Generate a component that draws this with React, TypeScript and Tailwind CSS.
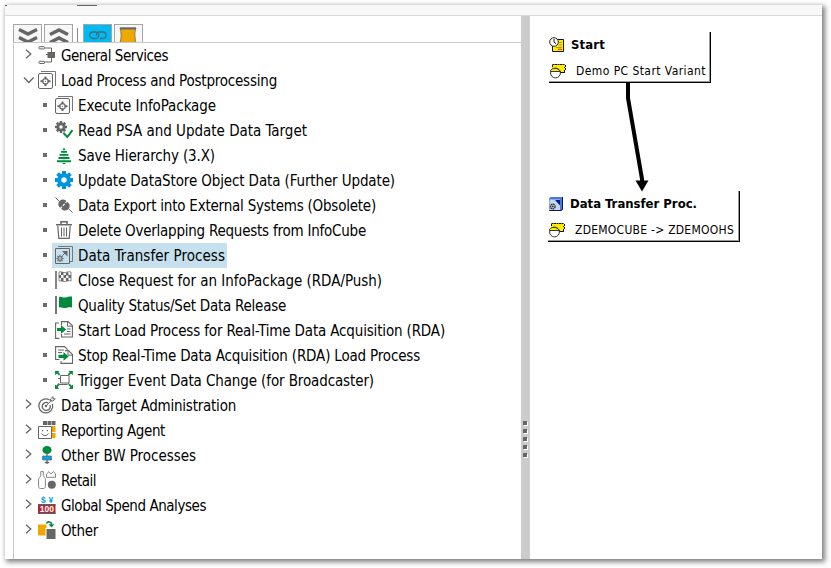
import { useLayoutEffect, useRef, type ReactNode } from 'react';

const G = '#666666';
const GREEN = '#008a3b';

/** Text label whose letter spacing is adjusted so that it fills a given width. */
function Label({ text, width, className = '' }: { text: string; width: number; className?: string }) {
  const ref = useRef<HTMLSpanElement>(null);
  useLayoutEffect(() => {
    const el = ref.current;
    if (!el) return;
    el.style.letterSpacing = '0px';
    const natural = el.getBoundingClientRect().width;
    el.style.letterSpacing = `${(width - natural) / text.length}px`;
  }, [text, width]);
  return (
    <span ref={ref} className={`inline-block whitespace-nowrap ${className}`}>
      {text}
    </span>
  );
}

function Icon({ children }: { children: ReactNode }) {
  return (
    <svg width="18" height="18" viewBox="0 0 18 18" fill="none" className="mt-[3px] shrink-0 overflow-visible">
      {children}
    </svg>
  );
}

const gearTeeth = (cx: number, cy: number, r: number, w: number) =>
  [0, 45, 90, 135].map((a) => (
    <rect key={a} x={cx - w / 2} y={cy - r} width={w} height={r * 2} transform={`rotate(${a} ${cx} ${cy})`} />
  ));

const icons: Record<string, ReactNode> = {
  services: (
    <Icon>
      <path d="M7 2h6.500v4M13.500 12v4H7" stroke={G} />
      <rect x="1" y=".7" width="5.500" height="2.200" rx=".6" stroke={G} />
      <rect x="1" y="15.300" width="5.500" height="2.200" rx=".6" stroke={G} />
      <path d="M8 8.500h2" stroke={G} />
      <rect x="9.500" y="6" width="7.500" height="6" fill={G} />
    </Icon>
  ),
  pack: (
    <Icon>
      <path d="M3 .5H17.500V15" stroke="#777" />
      <rect x=".5" y="2.500" width="14" height="15" rx="1.500" stroke={G} />
      <path d="M6.500 5.500h2v2.500h-2zM6.500 12.500h2V15h-2zM2.500 9.300H5v2H2.500zM10 9.300h2.500v2H10z" fill={G} />
      <rect x="5" y="7.800" width="5" height="5" rx="1.500" stroke={G} strokeWidth="1.300" />
      <rect x="7" y="9.800" width="1" height="1" fill={G} />
    </Icon>
  ),
  gearCheck: (
    <Icon>
      <g fill={G}>{gearTeeth(6, 6, 6, 2.5)}</g>
      <circle cx="6" cy="6" r="3.200" stroke={G} strokeWidth="2.600" />
      <circle cx="6" cy="6" r="1.700" fill="#fff" />
      <path d="M8.300 11.800l4 4.200 5.200-6.800" stroke="#fff" strokeWidth="4" />
      <path d="M8.300 11.800l4 4.200 5.200-6.800" stroke={GREEN} strokeWidth="2" />
    </Icon>
  ),
  hierarchy: (
    <Icon>
      <path
        d="M9 1.800l1.800 2H7.200zM6 5h6v1.700H6zM4.500 8h9v1.700h-9zM3.500 11h11v2h-11zM2 14.200h14v2H2z"
        fill={GREEN}
      />
      <path d="M8.500 3.500h1V15h-1z" fill={GREEN} opacity=".5" />
      <path d="M7.500 17h3v1h-3z" fill={GREEN} />
    </Icon>
  ),
  gear: (
    <Icon>
      <g fill="#0094df">{gearTeeth(9, 9, 9, 4)}</g>
      <circle cx="9" cy="9" r="4.800" stroke="#0094df" strokeWidth="4" />
      <circle cx="9" cy="9" r="2.700" fill="#fff" />
    </Icon>
  ),
  plug: (
    <Icon>
      <path d="M.5 1.500l4 4M13.500 12.500l4 4" stroke={G} />
      <g transform="rotate(42 9 9)">
        <path d="M8.200 4.500H7a4 4.500 0 000 9h1.200zM9.300 4.500H11a4 4.500 0 010 9H9.300z" fill={G} />
        <path d="M7.500 7h2.500M7.500 11h2.500" stroke={G} strokeWidth="1.200" />
      </g>
    </Icon>
  ),
  trash: (
    <Icon>
      <path d="M1 3.700h16M6 3V.8h6V3" stroke={G} strokeWidth="1.500" />
      <path d="M2.800 5l1 12.300h10.400L15.200 5" stroke={G} strokeWidth="1.200" />
      <path d="M6.500 6.500v9M9 6.500v9M11.500 6.500v9" stroke={G} />
    </Icon>
  ),
  transfer: (
    <Icon>
      <path d="M3 .5h14.500V15.500H15" stroke="#777" />
      <path d="M.5 2.500h14v15H.5z" stroke={G} />
      <path d="M7 5h5.500v5.500z" fill={G} />
      <path d="M12 5l-4.500 4.500" stroke={G} />
      <g fill={G}>{gearTeeth(5, 12.5, 3.6, 1.2)}</g>
      <circle cx="5" cy="12.500" r="1.900" fill="#c7e0ee" stroke={G} />
      <rect x="4.500" y="12" width="1" height="1" fill={G} />
    </Icon>
  ),
  checkered: (
    <Icon>
      <path d="M1 0v18" stroke={G} strokeWidth="1.600" />
      <path d="M4 1c2-1 4 1 6.300.5C12.500 1 14 .3 16 1v9c-2-.7-3.500 0-5.500.5S6 9.300 4 10z" stroke={G} strokeWidth=".8" />
      <path d="M6 1h2.500v3H6zM11 1.500h2.500v3H11zM4 4h2v3H4zM8.500 4H11v3H8.500zM13.500 4H16v3h-2.500zM6 7h2.500v3H6zM11 7h2.500v3H11z" fill={G} />
    </Icon>
  ),
  flag: (
    <Icon>
      <path d="M1 0v18" stroke={G} strokeWidth="1.800" />
      <path d="M4 1c2-1.200 4 .9 6.300.5C13 1 14.500.2 17 .5v11c-2.500-.8-4 0-6.300.5S6 10.300 4 11.500z" fill={GREEN} />
    </Icon>
  ),
  start: (
    <Icon>
      <path d="M4.500 17.400H.6V2H4M6.500 4.500V.6H13l4.400 4v11.400H6.500V13" stroke={G} strokeWidth="1.100" />
      <path d="M12.500 1v4.200H17M12 8h3.500M12 10.500h3.500M9 13h6.500" stroke={G} />
      <path d="M2 7h4V4.200L11.300 8.500 6 12.800V10H2z" fill={GREEN} />
    </Icon>
  ),
  stop: (
    <Icon>
      <path d="M4.500 13.500H.6V.6h9l3 3M10 4.600h3.500l4 4v8.800H6V15" stroke={G} strokeWidth="1.100" />
      <path d="M3 4h6M3 6.500h4M13 5v4.200h4" stroke={G} />
      <path d="M3.500 8.800h5V6.100l5.200 4.400-5.200 4.300v-2.700h-5z" fill={GREEN} />
    </Icon>
  ),
  trigger: (
    <Icon>
      <path
        d="M0 0h4.500L3.300 1.300l2 2-1.300 1.300-2-2L.3 4.300zM18 0h-4.500l1.200 1.300-2 2L14 4.600l2-2 1.700 1.700zM0 18v-4.500l1.300 1.200 2-2L4.600 14l-2 2 1.700 1.700zM18 18v-4.500l-1.300 1.200-2-2L13.400 14l2 2-1.700 1.700z"
        fill={GREEN}
      />
      <path d="M5.500 4.500h8.500v7.500H5.500z" stroke={G} />
      <path d="M3 7.500h2M3 13.500h9M4 12l-1.500 2.500M14 12l-1.500 2" stroke={G} />
    </Icon>
  ),
  target: (
    <Icon>
      <path d="M11.500 4A7 7 0 1014.500 8" stroke={G} strokeWidth="1.300" />
      <path d="M10 6.800a4 4 0 102 2.200" stroke={G} strokeWidth="1.300" />
      <circle cx="8" cy="10" r="1.200" fill={G} />
      <path d="M8 10l6-6.300M12.500 5V3L15 .6v2.200h2.300L15 5z" stroke={G} />
    </Icon>
  ),
  agent: (
    <Icon>
      <path d="M5 0h4v4H5zM9.500 0h4v4h-4zM14 0h3.500v4H14z" fill={G} />
      <path d="M14 5h3.500v6H14zM14 12h3.500v5H14z" fill="#f0a800" />
      <path d="M.5 5.500h13v12H.5z" fill="#fff" stroke={G} />
      <path d="M4 9h1.200v1.300H4zM8.800 9H10v1.300H8.800z" fill={G} />
      <path d="M3.500 12.500c1.500 2.700 5.500 2.700 7 0" stroke={G} />
    </Icon>
  ),
  other: (
    <Icon>
      <ellipse cx="9" cy="4" rx="4.600" ry="4" fill={GREEN} />
      <path d="M9 7v11" stroke={G} strokeWidth="1.300" />
      <path d="M4.500 10h9v4h-9z" fill="#00a5e5" stroke={G} strokeWidth=".7" />
      <path d="M6.800 15.800h4.400v1.400H6.800z" fill={G} />
    </Icon>
  ),
  retail: (
    <Icon>
      <path d="M2.800.6h2.500v4.200C6.200 6 7.400 7 7.400 8.500v7c0 1.400-.8 2-2 2H2.600c-1.200 0-2-.6-2-2v-7C.6 7 2.800 6 2.800 4z" stroke="#777" strokeWidth=".9" />
      <path d="M8.500 6.300V3L11 .6l2 2.400L15.500.6l2 2.400v3.300z" stroke="#777" strokeWidth=".9" />
      <circle cx="13.800" cy="13.800" r="4" fill={G} />
    </Icon>
  ),
  spend: (
    <Icon>
      <text x="3" y="6.600" fontSize="8.500" fontWeight="bold" fontFamily="Liberation Sans" fill="#009de0">$</text>
      <text x="10.500" y="6.600" fontSize="8.500" fontWeight="bold" fontFamily="Liberation Sans" fill="#009de0">¥</text>
      <path d="M0 8h17.500v10H0z" fill="#bb1f26" />
      <path d="M0 8h17.500v1.500H0zM0 16.500h17.500V18H0z" fill="#62595a" />
      <text x="1.700" y="16" fontSize="8.500" fontWeight="bold" fontFamily="Liberation Sans" fill="#fff">100</text>
    </Icon>
  ),
  misc: (
    <Icon>
      <path d="M0 3.500h8.500v11H0z" fill="#f0a800" />
      <path d="M7.500 7h10.500V18H7.500z" fill="#fff" />
      <path d="M8.500 8h9v10h-9z" fill={G} />
      <path d="M8.500 2.500c1-2.500 5-2 5 1" stroke={GREEN} strokeWidth="1.600" />
      <path d="M10.500 3.300h6l-3 3.200z" fill={GREEN} />
    </Icon>
  ),
};

type Row = { icon: string; text: string; w: number; child?: boolean; open?: boolean; selected?: boolean };

const rows: Row[] = [
  { icon: 'services', text: 'General Services', w: 107 },
  { icon: 'pack', text: 'Load Process and Postprocessing', w: 216, open: true },
  { icon: 'pack', text: 'Execute InfoPackage', w: 138, child: true },
  { icon: 'gearCheck', text: 'Read PSA and Update Data Target', w: 229, child: true },
  { icon: 'hierarchy', text: 'Save Hierarchy (3.X)', w: 137, child: true },
  { icon: 'gear', text: 'Update DataStore Object Data (Further Update)', w: 317, child: true },
  { icon: 'plug', text: 'Data Export into External Systems (Obsolete)', w: 298, child: true },
  { icon: 'trash', text: 'Delete Overlapping Requests from InfoCube', w: 288, child: true },
  { icon: 'transfer', text: 'Data Transfer Process', w: 147, child: true, selected: true },
  { icon: 'checkered', text: 'Close Request for an InfoPackage (RDA/Push)', w: 304, child: true },
  { icon: 'flag', text: 'Quality Status/Set Data Release', w: 208, child: true },
  { icon: 'start', text: 'Start Load Process for Real-Time Data Acquisition (RDA)', w: 367, child: true },
  { icon: 'stop', text: 'Stop Real-Time Data Acquisition (RDA) Load Process', w: 342, child: true },
  { icon: 'trigger', text: 'Trigger Event Data Change (for Broadcaster)', w: 296, child: true },
  { icon: 'target', text: 'Data Target Administration', w: 175 },
  { icon: 'agent', text: 'Reporting Agent', w: 104 },
  { icon: 'other', text: 'Other BW Processes', w: 135 },
  { icon: 'retail', text: 'Retail', w: 35 },
  { icon: 'spend', text: 'Global Spend Analyses', w: 145 },
  { icon: 'misc', text: 'Other', w: 37 },
];

function TreeRow({ row }: { row: Row }) {
  return (
    <div className={`flex h-[25px] items-start ${row.child ? 'pl-[29px]' : 'pl-[9px]'}`}>
      {row.child ? (
        <span className="mt-2.5 mr-[5px] size-1 shrink-0 bg-[#6c6c6c]" />
      ) : (
        <svg width="12" height="14" viewBox="0 0 12 14" fill="none" stroke="#666" strokeWidth="1.300" className="mt-1 mr-[3px] shrink-0">
          {row.open ? <path d="M1 5.500l4.800 5 4.800-5" /> : <path d="M3 2.800l4.800 4.200L3 11.200" />}
        </svg>
      )}
      <div className={`flex h-[25px] items-start gap-[5px] pr-0.5 ${row.child ? 'pl-[3px]' : ''} ${row.selected ? 'bg-[#c7e0ee]' : ''}`}>
        {icons[row.icon]}
        <Label text={row.text} width={row.w} className="pt-px text-[15px] leading-[25px]" />
      </div>
    </div>
  );
}

function ToolButton({ active, children }: { active?: boolean; children: ReactNode }) {
  return (
    <div className={`flex h-[18px] w-[29px] justify-center overflow-hidden border border-b-0 border-[#a5a5a5] ${active ? 'bg-[#00bbf2]' : 'bg-[#f7f7f7]'}`}>
      {children}
    </div>
  );
}

function VariantIcon() {
  return (
    <svg width="17" height="16" viewBox="0 0 17 16" fill="none" className="shrink-0">
      <path d="M3 1h13v8H3z" fill="#ffec00" />
      <path d="M3.500 4V1.500H16" stroke="#111" strokeDasharray="2 .5" />
      <path d="M16.500 2v2M15.500 4v1M16.500 5v2M15.500 7v2M11 9.500h5" stroke="#111" />
      <circle cx="6.500" cy="10" r="4.900" stroke="#333" />
      <path d="M1.500 7.500C3 4.500 9 4.500 11.500 8.500H1.500z" fill="#ffec00" stroke="#222" strokeWidth=".9" />
    </svg>
  );
}

function StartIcon() {
  return (
    <svg width="17" height="16" viewBox="0 0 17 16" fill="none" className="shrink-0">
      <path d="M3.500 2.500h11v11.500h-11z" fill="#ffec00" />
      <path d="M8 2.500h6.500v12H3.500V9" stroke="#111" />
      <path d="M10 5.500h3M9.500 8h3.500M7 10.500h6" stroke="#b29a00" />
      <path d="M9 12.300h4" stroke="#e02020" />
      <circle cx="5" cy="5" r="4.300" fill="#fff" stroke="#222" />
      <path d="M5 2v3.200l2 1.500" stroke="#111" />
    </svg>
  );
}

function TransferNodeIcon() {
  return (
    <svg width="17" height="16" viewBox="0 0 17 16" fill="none" className="shrink-0">
      <path d="M1 2.500L2.500 1h12v12.500L13 15H1z" fill="#4d79d9" />
      <path d="M14.500 1v12.500L13 14.500H1.500" stroke="#10193f" />
      <path d="M1.500 3.500H12V14H1.500z" fill="#c4d8fb" />
      <path d="M7 4h5v5.500z" fill="#0b1597" />
      <circle cx="4.700" cy="10.500" r="2.400" fill="#bbb" stroke="#222" strokeWidth="1.200" strokeDasharray="1.500 .6" />
      <circle cx="4.700" cy="10.500" r=".7" fill="#111" />
    </svg>
  );
}

const nodeEdge = 'shadow-[inset_-1px_-1px_0_#999] border-r border-b border-black';

export default function App() {
  return (
    <div className="h-[568px] w-[831px] overflow-hidden bg-white pt-[5px] pl-[5px] font-['DejaVu_Sans_Condensed','DejaVu_Sans',sans-serif] text-black">
      <div className="relative flex h-[554px] w-[817px] flex-col bg-white shadow-[2px_2px_5px_1px_rgba(0,0,0,0.5)]">
        <div className="h-[11px] shrink-0 border-b border-[#dadada] bg-[#f8f8f8]" />
        <span className="absolute top-0 left-0 h-px w-0.5 bg-[#555]" />
        <span className="absolute top-0 left-[72px] h-px w-5 bg-[#666]" />
        <div className="flex grow">
          <section className="flex w-[516px] flex-col pl-2">
            <div className="flex h-[26px] shrink-0 items-end gap-0.5">
              <ToolButton>
                <svg width="20" height="19" viewBox="0 0 20 19" fill="none" stroke="#666" strokeWidth="3.400">
                  <path d="M1 4.500l9 4.500 9-4.500M1 12.500l9 4.500 9-4.500" />
                </svg>
              </ToolButton>
              <ToolButton>
                <svg width="20" height="19" viewBox="0 0 20 19" fill="none" stroke="#666" strokeWidth="3.400">
                  <path d="M1 9.500L10 5l9 4.500M1 17.500l9-4.500 9 4.500" />
                </svg>
              </ToolButton>
              <span className="mr-[3px] ml-0.5 h-[14px] w-px bg-[#888]" />
              <ToolButton active>
                <svg width="20" height="18" viewBox="0 0 20 18" fill="none" stroke="#426f80" strokeWidth="1.300">
                  <rect x="1.700" y="7" width="9" height="6.500" rx="3.200" />
                  <path d="M8.500 10.500C8.500 8.200 9.500 7 11.500 7h3.300a3.200 3.200 0 010 6.500H12" />
                </svg>
              </ToolButton>
              <ToolButton>
                <svg width="20" height="18" viewBox="0 0 20 18" className="-ml-0.5">
                  <path d="M2 3h16c-1.500 4-1.500 8 0 15H2c1.500-6 1.500-10 0-15z" fill="#eea800" stroke="#666" strokeWidth=".8" />
                  <path d="M2 2.500h16v2H2z" fill="#666" />
                </svg>
              </ToolButton>
            </div>
            <div className="grow border-t border-l border-[#c8c8c8]">
              {rows.map((row) => (
                <TreeRow key={row.text} row={row} />
              ))}
            </div>
          </section>
          <div className="flex w-[9px] flex-col items-center gap-1 bg-[#ccc] pt-[405px]">
            {[0, 1, 2, 3, 4].map((n) => (
              <span key={n} className="mr-px size-1 bg-[#666] shadow-[1px_1px_0_#fff]" />
            ))}
          </div>
          <section className="relative grow">
            <div className={`absolute top-4 left-[19px] flex h-[51px] w-[162px] flex-col pt-[3px] ${nodeEdge}`}>
              <div className="flex h-[19px] items-center">
                <StartIcon />
                <Label text="Start" width={34} className="ml-[5px] text-[13px] font-bold" />
              </div>
              <div className="mt-[7px] flex h-[19px] items-center">
                <VariantIcon />
                <Label text="Demo PC Start Variant" width={130} className="ml-2.5 text-[12px]" />
              </div>
            </div>
            <svg width="30" height="110" viewBox="0 0 30 110" className="absolute top-[66px] left-[92px]">
              <path d="M6 0v16l14 81v4" fill="none" stroke="#000" strokeWidth="4" />
              <path d="M13.500 98.500h13L20 109.500z" />
            </svg>
            <div className={`absolute top-[175px] left-[18px] flex h-[51px] w-[192px] flex-col pt-[3px] ${nodeEdge}`}>
              <div className="flex h-[19px] items-center">
                <TransferNodeIcon />
                <Label text="Data Transfer Proc." width={127} className="ml-[5px] text-[13px] font-bold" />
              </div>
              <div className="mt-[7px] flex h-[19px] items-center">
                <VariantIcon />
                <Label text="ZDEMOCUBE -> ZDEMOOHS" width={159} className="ml-2.5 text-[12px]" />
              </div>
            </div>
          </section>
        </div>
      </div>
    </div>
  );
}
